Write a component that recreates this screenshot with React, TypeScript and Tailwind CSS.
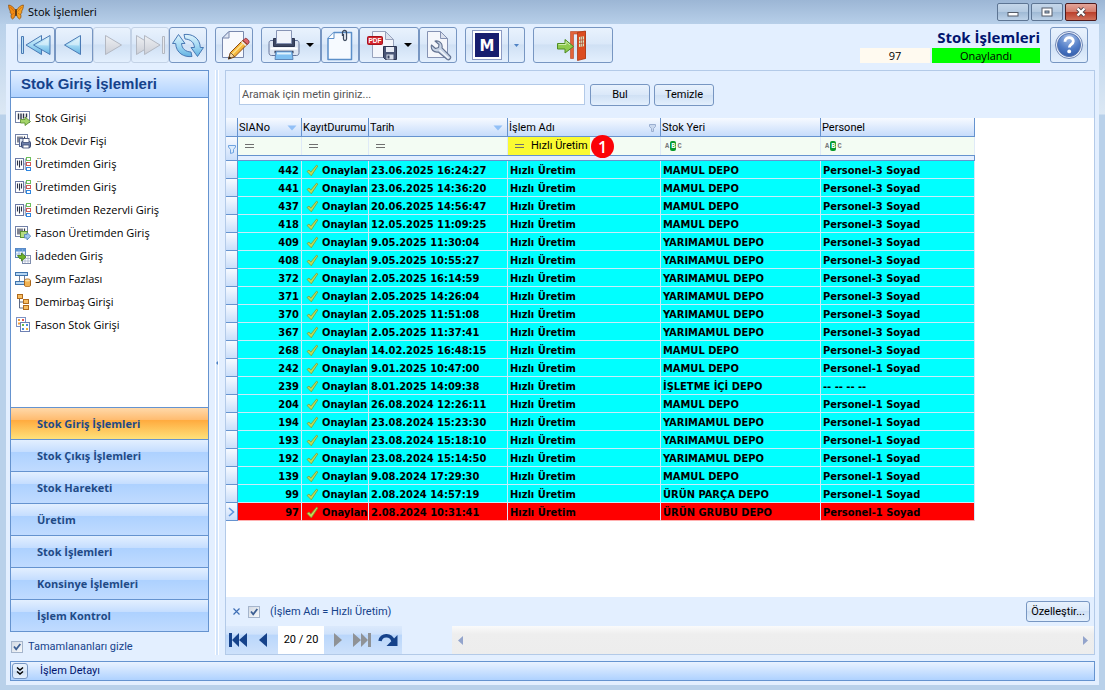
import type { ReactNode } from "react";
import clsx from "clsx";

type IconKind = "in" | "save" | "tree" | "outsource" | "grid" | "count" | "asset" | "squares";

const menuItems: { label: string; icon: IconKind }[] = [
  { label: "Stok Girişi", icon: "in" },
  { label: "Stok Devir Fişi", icon: "save" },
  { label: "Üretimden Giriş", icon: "tree" },
  { label: "Üretimden Giriş", icon: "tree" },
  { label: "Üretimden Rezervli Giriş", icon: "tree" },
  { label: "Fason Üretimden Giriş", icon: "outsource" },
  { label: "İadeden Giriş", icon: "grid" },
  { label: "Sayım Fazlası", icon: "count" },
  { label: "Demirbaş Girişi", icon: "asset" },
  { label: "Fason Stok Girişi", icon: "squares" },
];

const groups = [
  "Stok Giriş İşlemleri",
  "Stok Çıkış İşlemleri",
  "Stok Hareketi",
  "Üretim",
  "Stok İşlemleri",
  "Konsinye İşlemleri",
  "İşlem Kontrol",
];

const rows: [number, string, string, string][] = [
  [442, "23.06.2025 16:24:27", "MAMUL DEPO", "Personel-3 Soyad"],
  [441, "23.06.2025 14:36:20", "MAMUL DEPO", "Personel-3 Soyad"],
  [437, "20.06.2025 14:56:47", "MAMUL DEPO", "Personel-3 Soyad"],
  [418, "12.05.2025 11:09:25", "MAMUL DEPO", "Personel-3 Soyad"],
  [409, "9.05.2025 11:30:04", "YARIMAMUL DEPO", "Personel-3 Soyad"],
  [408, "9.05.2025 10:55:27", "YARIMAMUL DEPO", "Personel-3 Soyad"],
  [372, "2.05.2025 16:14:59", "YARIMAMUL DEPO", "Personel-3 Soyad"],
  [371, "2.05.2025 14:26:04", "YARIMAMUL DEPO", "Personel-3 Soyad"],
  [370, "2.05.2025 11:51:08", "YARIMAMUL DEPO", "Personel-3 Soyad"],
  [367, "2.05.2025 11:37:41", "YARIMAMUL DEPO", "Personel-3 Soyad"],
  [268, "14.02.2025 16:48:15", "MAMUL DEPO", "Personel-3 Soyad"],
  [242, "9.01.2025 10:47:00", "MAMUL DEPO", "Personel-1 Soyad"],
  [239, "8.01.2025 14:09:38", "İŞLETME İÇİ DEPO", "-- -- -- --"],
  [204, "26.08.2024 12:26:11", "MAMUL DEPO", "Personel-1 Soyad"],
  [194, "23.08.2024 15:23:30", "YARIMAMUL DEPO", "Personel-1 Soyad"],
  [193, "23.08.2024 15:18:10", "YARIMAMUL DEPO", "Personel-1 Soyad"],
  [192, "23.08.2024 15:14:50", "YARIMAMUL DEPO", "Personel-1 Soyad"],
  [139, "9.08.2024 17:29:30", "MAMUL DEPO", "Personel-1 Soyad"],
  [99, "2.08.2024 14:57:19", "ÜRÜN PARÇA DEPO", "Personel-1 Soyad"],
  [97, "2.08.2024 10:31:41", "ÜRÜN GRUBU DEPO", "Personel-1 Soyad"],
];

/* ---------- icons ---------- */

function Butterfly() {
  return (
    <svg width="16" height="16" viewBox="0 0 16 16">
      <path d="M7.6 6.5C6 3.5 3 1 .6 1c0 2.500.6 4.600 1.700 6-.5 1.500.2 2.700 1.200 3C2.500 12 3 14.500 4.500 15c1.700-.6 3-3.500 3.200-6z" fill="#f08c14" stroke="#8a4a0c" strokeWidth=".7" />
      <path d="M8.400 6.500C10 3.500 13 1 15.400 1c0 2.500-.6 4.600-1.700 6 .5 1.500-.2 2.700-1.200 3 1 2 .5 4.500-1 5-1.700-.6-3-3.500-3.200-6z" fill="#f6a11e" stroke="#8a4a0c" strokeWidth=".7" />
      <path d="M2.300 3l4 4.500M13.700 3l-4 4.500M4.200 10.500l2-1.500M11.800 10.500l-2-1.500" stroke="#c9600a" strokeWidth=".7" />
      <path d="M8 5v7" stroke="#3a1d05" strokeWidth="1.200" />
    </svg>
  );
}

function BlueDefs() {
  return (
    <defs>
      <linearGradient id="nb" x1="0" y1="0" x2="0" y2="1">
        <stop offset="0" stopColor="#dff3fc" />
        <stop offset=".5" stopColor="#a5daf4" />
        <stop offset="1" stopColor="#62b2e2" />
      </linearGradient>
      <linearGradient id="ng" x1="0" y1="0" x2="0" y2="1">
        <stop offset="0" stopColor="#eef0f3" />
        <stop offset="1" stopColor="#cbced6" />
      </linearGradient>
    </defs>
  );
}

function FirstIcon() {
  return (
    <svg width="32" height="32" viewBox="0 0 32 32" strokeLinejoin="round">
      <BlueDefs />
      <rect x="1.500" y="7.500" width="2" height="17" fill="#b8e0f5" stroke="#4a7ab5" />
      <path d="M21.500 6.500v19L6 16z" fill="url(#nb)" stroke="#4a7ab5" />
      <path d="M30 6.500v19L13.500 16z" fill="url(#nb)" stroke="#4a7ab5" />
      <path d="M28.500 9.500v7l-12-.5z" fill="#fff" opacity=".4" />
    </svg>
  );
}

function PrevIcon() {
  return (
    <svg width="32" height="32" viewBox="0 0 32 32" strokeLinejoin="round">
      <path d="M22.500 6.500v19L6.500 16z" fill="url(#nb)" stroke="#4a7ab5" />
      <path d="M21 9.500v7L9 16z" fill="#fff" opacity=".4" />
    </svg>
  );
}

function NextIcon() {
  return (
    <svg width="32" height="32" viewBox="0 0 32 32" strokeLinejoin="round">
      <path d="M9.500 6.500v19L25.500 16z" fill="url(#ng)" stroke="#b3b8c2" />
    </svg>
  );
}

function LastIcon() {
  return (
    <svg width="32" height="32" viewBox="0 0 32 32" strokeLinejoin="round">
      <path d="M2.500 6.500v19L18 16z" fill="url(#ng)" stroke="#b3b8c2" />
      <path d="M10.500 6.500v19L26 16z" fill="url(#ng)" stroke="#b3b8c2" />
      <rect x="28.500" y="7.500" width="2" height="17" fill="#e8eaee" stroke="#b3b8c2" />
    </svg>
  );
}

function RefreshIcon() {
  return (
    <svg width="32" height="32" viewBox="0 0 32 32" strokeLinejoin="round">
      <path d="M6.500 5.500l6.500 9H9.500c.3 5 4 8.300 9.500 8.500l1 4.500C12 28.500 4 24 3.700 14.500H.5z" fill="url(#nb)" stroke="#4a7ab5" />
      <path d="M25.500 27.500l-6.500-9h3.500c-.3-5-4-8.300-9.500-8.500l-1-4.500C20 4.500 28 9 28.300 18.500h3.200z" fill="url(#nb)" stroke="#4a7ab5" />
    </svg>
  );
}

function EditIcon() {
  return (
    <svg width="32" height="32" viewBox="0 0 32 32">
      <path d="M11 2.500H25.500V28.500H4.500V9z" fill="#f7f9fd" stroke="#7888ad" strokeLinejoin="round" />
      <path d="M11 2.500V9H4.500z" fill="#dfe6f3" stroke="#7888ad" strokeLinejoin="round" />
      <path d="M10.500 30l2-6.500L24.500 11.500l4.500 4L16.500 28z" fill="#f6b73c" stroke="#8a4b12" strokeLinejoin="round" />
      <path d="M14.500 25L26 13.500" stroke="#fbe08d" strokeWidth="1.600" />
      <path d="M25 11.500l2-2c1.500-.7 4.500 2 4 4l-1.500 2z" fill="#e06668" stroke="#8c2f38" />
      <path d="M23.500 12.500l4.500 4" stroke="#e8e8f0" strokeWidth="1.500" />
      <path d="M10.500 30l2-6.500 4 4z" fill="#f5d9a8" stroke="#5b3210" strokeWidth=".7" />
      <path d="M10.500 30.200l.9-3 2 1.900z" fill="#222" />
    </svg>
  );
}

function PrinterIcon() {
  return (
    <svg width="32" height="32" viewBox="0 0 32 32" strokeLinejoin="round">
      <path d="M3 11.500h26c1.500 0 2 1.500 2 3v9c0 2-1 3-2.500 3h-25c-1.500 0-2.500-1-2.500-3v-9c0-1.500.5-3 2-3z" fill="#dde5f2" stroke="#64749a" />
      <path d="M5.500 9.500h21v8h-21z" fill="#3d4763" stroke="#2c3550" />
      <path d="M8.500 1.500h15v13h-15z" fill="#f0f4fb" stroke="#8794b5" />
      <path d="M2.500 19.500h27" stroke="#fff" strokeWidth="2" />
      <path d="M6.500 23h19" stroke="#2e3852" strokeWidth="2.500" />
      <path d="M8 22.500h16l1 8h-18z" fill="#7fc0f2" stroke="#5d86b8" />
      <path d="M9 24.500h14" stroke="#dff1fd" strokeWidth="2" />
    </svg>
  );
}

function PaperClipIcon() {
  return (
    <svg width="32" height="32" viewBox="0 0 32 32">
      <path d="M10 3.500H27.500V30.500H4V9.500z" fill="#f6faff" stroke="#5b8fc9" strokeWidth="1.500" strokeLinejoin="round" />
      <path d="M10 3.500V9.500H4" fill="#fff" stroke="#5b8fc9" strokeLinejoin="round" />
      <path d="M18.500 7V3.500a2 2 0 0 1 4 0V10a1.500 1.500 0 0 1-3 0V5" fill="none" stroke="#3d4a5e" strokeWidth="1.300" />
    </svg>
  );
}

function PdfIcon() {
  return (
    <svg width="32" height="32" viewBox="0 0 32 32">
      <path d="M6.500 2.500H19.500L27.500 10.500V28.500H6.500z" fill="#f4f6fb" stroke="#98a3bd" />
      <path d="M19.500 2.500V10.500H27.500z" fill="#dce2ee" stroke="#98a3bd" />
      <rect x="1.500" y="7.500" width="15" height="8" rx="1" fill="#d3232b" stroke="#a5141c" />
      <text x="2.500" y="14" fontFamily="Liberation Sans, sans-serif" fontWeight="700" fontSize="6.500" fill="#fff">PDF</text>
      <path d="M17.500 17.500h13v13h-11l-2-2z" fill="#4a5676" stroke="#2c3550" />
      <rect x="20" y="18" width="8" height="5" fill="#e8ecf5" />
      <rect x="20.500" y="25.500" width="7" height="5" fill="#d9dfeb" />
      <rect x="21.500" y="26.500" width="2" height="3" fill="#36415f" />
    </svg>
  );
}

function WrenchIcon() {
  return (
    <svg width="32" height="32" viewBox="0 0 32 32" strokeLinejoin="round">
      <path d="M5.500 2.500H18.500L25.500 9.500V28.500H5.500z" fill="#f4f6fb" stroke="#8592b3" />
      <path d="M18.500 2.500V9.500H25.500z" fill="#dce2ee" stroke="#8592b3" />
      <path d="M9.500 16l4 3.500 3-1 .5-3-4-3.500c4-.8 8 2 7 6.800l8.500 8.700c1 1.500-1.500 4.200-3.200 3l-9-7.500c-4.500.8-8-2.500-6.800-7z" fill="#c8d4e6" stroke="#62718f" strokeWidth="1.100" />
      <path d="M17.500 21l9 8.300" stroke="#f5f8fc" strokeWidth="1.200" />
    </svg>
  );
}

function LogoM() {
  return (
    <svg width="30" height="32" viewBox="0 0 30 32">
      <rect x=".5" y="1.500" width="29" height="29" fill="#fff" stroke="#8c9bc4" />
      <rect x="3" y="4" width="24" height="24" fill="#171d6e" />
      <text x="15" y="21.500" textAnchor="middle" fontFamily="DejaVu Sans, sans-serif" fontWeight="700" fontSize="15" fill="#fff">M</text>
    </svg>
  );
}

function DoorIcon() {
  return (
    <svg width="32" height="32" viewBox="0 0 32 32" strokeLinejoin="round">
      <path d="M13.500 2.500h15v27h-2.500V5h-9.500v24.500h-3z" fill="#e2643b" stroke="#b8431f" strokeWidth=".6" />
      <path d="M20.500 3.500l8-1.500v27.500l-8 2z" fill="#dc4c20" stroke="#a83a17" strokeWidth=".8" />
      <path d="M22 8l5-.7v10l-5 .7z" fill="#d8e6c0" />
      <path d="M23.700 7.700v10M25.500 7.500v10M22 11.300l5-.5M22 14.600l5-.5" stroke="#b3452a" strokeWidth=".7" />
      <path d="M.5 14.500h7.500V10.500l8.500 7-8.500 6.500v-4H.5z" fill="#8fcb4f" stroke="#4e8c22" />
      <path d="M1.500 15.500h7.500v-3l4 3.500" fill="none" stroke="#cdebab" />
    </svg>
  );
}

function HelpIcon() {
  return (
    <svg width="32" height="32" viewBox="0 0 32 32">
      <defs>
        <radialGradient id="hp" cx=".5" cy=".15" r=".9">
          <stop offset="0" stopColor="#a9c2ea" />
          <stop offset=".6" stopColor="#4f7bc6" />
          <stop offset="1" stopColor="#2f59a8" />
        </radialGradient>
      </defs>
      <circle cx="16" cy="16" r="13.500" fill="#e8eef8" stroke="#6e86b5" />
      <circle cx="16" cy="16" r="11.500" fill="url(#hp)" stroke="#5574b0" />
      <path d="M12 12.800c0-5.600 8.600-5.300 8.300-.4-.2 3-4 3-4 6" fill="none" stroke="#fff" strokeWidth="2.800" />
      <circle cx="16.200" cy="22.400" r="1.900" fill="#fff" />
    </svg>
  );
}

function Barcode() {
  return (
    <>
      <rect x=".5" y="1.500" width="12" height="10" fill="#fff" stroke="#7382a8" />
      <path d="M3 3.500v6M5 3.500v6M7 3.500v6M9.500 3.500v6" stroke="#2c3348" strokeWidth="1.200" />
    </>
  );
}

function MenuIcon({ kind }: { kind: IconKind }) {
  let body: ReactNode = null;
  if (kind === "in")
    body = (
      <>
        <rect x=".5" y="1.500" width="14" height="11" fill="#fff" stroke="#7382a8" />
        <path d="M3.500 3.500v6M6 3.500v6M8.500 3.500v5M11.500 3.500v4" stroke="#2c3348" strokeWidth="1.400" />
        <path d="M5.500 9.500H10V7l5.500 4.500L10 15.500V13H5.500z" fill="#a4d46a" stroke="#558a2a" strokeWidth=".8" />
      </>
    );
  if (kind === "save")
    body = (
      <>
        <Barcode />
        <rect x="4.500" y="5.500" width="9" height="8" fill="#e3e9f4" stroke="#5b6b96" />
        <rect x="6.500" y="8.500" width="9" height="6" rx="1" fill="#6f80ab" stroke="#3c4a73" />
        <rect x="8" y="5.500" width="6" height="4" fill="#fff" stroke="#3c4a73" strokeWidth=".8" />
        <rect x="8" y="12" width="6" height="3" fill="#fff" stroke="#3c4a73" strokeWidth=".8" />
      </>
    );
  if (kind === "tree")
    body = (
      <>
        <rect x=".5" y="2.500" width="8" height="11" fill="#fff" stroke="#6d7ba6" />
        <path d="M2.500 4.500v5M4.500 4.500v7M6.500 4.500v5" stroke="#2c3348" strokeWidth="1.100" />
        <path d="M9 8h2.500M10.300 3v10.500M10.300 3h1M10.300 13.500h1" fill="none" stroke="#8a94ad" />
        <rect x="11.500" y="1.500" width="4" height="3" fill="#fff" stroke="#6cbf5b" />
        <rect x="11.500" y="6.500" width="4" height="3" fill="#fff" stroke="#cf5b57" />
        <rect x="11.500" y="11.500" width="4" height="3" fill="#fff" stroke="#2f86e0" />
      </>
    );
  if (kind === "outsource")
    body = (
      <>
        <Barcode />
        <rect x="5.500" y="6.500" width="7" height="6" fill="#b7dc83" stroke="#5d9534" />
        <path d="M9.500 9.500H12V7.500l3.700 3.700L12 15V13H9.500z" fill="#9dc4ef" stroke="#4c7db8" strokeWidth=".8" />
      </>
    );
  if (kind === "grid")
    body = (
      <>
        <rect x=".5" y=".5" width="10" height="9" fill="#eef5fd" stroke="#5b84b8" />
        <path d="M.5 2h10" stroke="#5a93d6" strokeWidth="3" />
        <path d="M4 1v8M7.500 1v8M.5 6h10" stroke="#8fb0d8" strokeWidth=".8" />
        <rect x="7.500" y="7.500" width="8" height="8" fill="#fff" stroke="#7d8bab" />
        <path d="M10 8v7M13 8v7M8 10.500h7M8 13h7" stroke="#a9b4cb" strokeWidth=".8" />
        <path d="M2.500 7.500h4V5l4.500 4-4.500 4v-2.500h-2z" fill="#6fb32c" stroke="#3c7a14" strokeWidth=".8" />
      </>
    );
  if (kind === "count")
    body = (
      <>
        <path d="M4.500 4v7M9.500 4v7" stroke="#6f7c95" fill="none" />
        <rect x=".5" y="1.500" width="12" height="3" fill="#b6d6f2" stroke="#3f74ad" />
        <rect x=".5" y="10.500" width="10" height="3" fill="#b6d6f2" stroke="#3f74ad" />
        <path d="M9.500 9.500c0-2 6-2 6 0v5c0 1.500-6 1.500-6 0z" fill="#f0b354" stroke="#a9651a" />
        <ellipse cx="12.500" cy="9.500" rx="2.500" ry="1" fill="#fbdfa4" />
      </>
    );
  if (kind === "asset")
    body = (
      <>
        <path d="M4.500 5v9h4M4.500 8h4" stroke="#5e6a84" fill="none" />
        <rect x="2.500" y=".5" width="5" height="4" fill="#f6bd62" stroke="#b06a1c" />
        <rect x="8.500" y="5.500" width="5" height="4" fill="#f6bd62" stroke="#b06a1c" />
        <rect x="8.500" y="11.500" width="5" height="4" fill="#f6bd62" stroke="#b06a1c" />
      </>
    );
  if (kind === "squares")
    body = (
      <>
        <rect x="1.500" y=".5" width="9" height="9" fill="#fff" stroke="#7d92c4" />
        <path d="M3 2h2v2H3zM3 5.500h2v2H3z" fill="#f09a3a" />
        <path d="M7 2h2v2H7z" fill="#e3574d" />
        <rect x="5.500" y="5.500" width="9" height="9" fill="#fff" stroke="#6d80b3" />
        <path d="M7 7h2v2H7z" fill="#66b84a" />
        <path d="M11 7h2v2h-2zM7 11h2v2H7z" fill="#4a8de0" />
        <path d="M11 11h2v2h-2z" fill="#f0b43a" />
      </>
    );
  return (
    <svg width="16" height="16" viewBox="0 0 16 16" className="shrink-0">
      {body}
    </svg>
  );
}

function CheckMark() {
  return (
    <svg width="13" height="13" viewBox="0 0 13 13" className="shrink-0">
      <path d="M1 7.500l2-1.500 1.800 2.200L10.500 1.200l1.300.8L5.300 11.800z" fill="#c3dd55" stroke="#7a9a3c" strokeWidth=".8" strokeLinejoin="round" />
    </svg>
  );
}

function Funnel() {
  return (
    <svg width="8" height="10" viewBox="0 0 8 10" className="shrink-0">
      <path d="M.5 1.500h7v1.500L5.500 5.500v3l-3 1v-4L.5 3z" fill="#dcebfc" stroke="#6ea3e0" />
    </svg>
  );
}

function SmallFunnel() {
  return (
    <svg width="7" height="8" viewBox="0 0 7 8" className="shrink-0">
      <path d="M.5.500h6v2L4.500 4.500v3h-2v-3L.5 2.500z" fill="#c9d8ee" stroke="#9aaed0" />
    </svg>
  );
}

function SortArrow() {
  return (
    <svg width="10" height="6" viewBox="0 0 10 6" className="shrink-0">
      <path d="M.5.500h9L5 5.500z" fill="#92c0f7" />
    </svg>
  );
}

function Equals() {
  return (
    <svg width="10" height="5" viewBox="0 0 10 5" className="shrink-0" shapeRendering="crispEdges">
      <path d="M0 .5h9M0 3.500h9" stroke="#6f6f6f" />
    </svg>
  );
}

function Abc() {
  return (
    <span className="flex items-center gap-px font-[Liberation_Mono,monospace] text-[7px] leading-[10px] font-bold text-[#777]">
      <span>A</span>
      <span className="rounded-xs bg-[#0a9a2c] px-px text-white">B</span>
      <span>C</span>
    </span>
  );
}

function DropArrow({ className }: { className: string }) {
  return (
    <svg width="8" height="4" viewBox="0 0 8 4" className={className}>
      <path d="M0 0h8L4 4z" fill="currentColor" />
    </svg>
  );
}

/* ---------- parts ---------- */

const face =
  "bg-[linear-gradient(#e9f2fd_0%,#dae8f9_48%,#cfe0f4_49%,#e3effd_100%)] border rounded-[3px]";

function ToolButton({
  label,
  children,
  disabled,
  className = "w-[38px]",
}: {
  label: string;
  children: ReactNode;
  disabled?: boolean;
  className?: string;
}) {
  return (
    <button
      aria-label={label}
      disabled={disabled}
      className={clsx(
        "flex h-9 items-center justify-center",
        face,
        disabled ? "border-[#c3d2e6]" : "border-[#7796c2]",
        className,
      )}
    >
      {children}
    </button>
  );
}

function TextButton({ children, className }: { children: ReactNode; className: string }) {
  return (
    <button className={clsx("flex items-center justify-center border-[#7796c2] text-black", face, className)}>
      {children}
    </button>
  );
}

function Tick({ id, label, className }: { id: string; label: string; className: string }) {
  return (
    <div className={clsx("flex items-center", className)}>
      <span className="relative size-3">
        <input
          id={id}
          type="checkbox"
          defaultChecked
          className="peer block size-3 appearance-none border border-[#a5b5cc] bg-[linear-gradient(135deg,#d3dae4,#f7f9fb)]"
        />
        <svg viewBox="0 0 12 12" className="pointer-events-none invisible absolute inset-0 size-3 peer-checked:visible">
          <path d="M3 5.500l2.200 2.800L9.300 3" fill="none" stroke="#3d5f93" strokeWidth="1.800" />
        </svg>
      </span>
      <label htmlFor={id}>{label}</label>
    </div>
  );
}

function TitleBar() {
  const btn = "flex h-[18px] w-8 items-center justify-center rounded-xs border";
  const blue = "border-[#5d7593] bg-[linear-gradient(#c5d7ea_0%,#b4cae1_48%,#9db8d4_49%,#bdd2e8_100%)]";
  return (
    <header className="flex h-6 items-center gap-1 bg-[linear-gradient(#9cb6d5,#b7cfe9)] px-2">
      <Butterfly />
      <h1 className="flex-1 font-[Open_Sans,sans-serif] text-[11px] text-black">Stok İşlemleri</h1>
      <div className="flex gap-0.5">
        <button aria-label="Simge durumuna küçült" className={clsx(btn, blue)}>
          <svg width="12" height="10" viewBox="0 0 12 10">
            <rect x="1" y="5.500" width="10" height="3.500" fill="#fff" stroke="#535b68" />
          </svg>
        </button>
        <button aria-label="Ekranı kapla" className={clsx(btn, blue)}>
          <svg width="12" height="10" viewBox="0 0 12 10">
            <rect x="1" y="1" width="10" height="8" fill="#fff" stroke="#535b68" />
            <rect x="4" y="4" width="4" height="2" fill="#9db8d4" stroke="#535b68" />
          </svg>
        </button>
        <button aria-label="Kapat" className={clsx(btn, "border-[#4f1a1c] bg-[linear-gradient(#e3a59a_0%,#d57c6c_48%,#b93c28_49%,#d0705a_100%)]")}>
          <svg width="12" height="10" viewBox="0 0 12 10">
            <path d="M2.500 1.500l7 7M9.500 1.500l-7 7" stroke="#53454a" strokeWidth="4" />
            <path d="M2.500 1.500l7 7M9.500 1.500l-7 7" stroke="#fff" strokeWidth="2.300" />
          </svg>
        </button>
      </div>
    </header>
  );
}

function Toolbar() {
  return (
    <div className="flex h-[46px] items-start pt-[3px] pr-[11px] pl-[11px]">
      <div className="flex">
        <ToolButton label="İlk kayıt"><FirstIcon /></ToolButton>
        <ToolButton label="Önceki kayıt"><PrevIcon /></ToolButton>
        <ToolButton label="Sonraki kayıt" disabled><NextIcon /></ToolButton>
        <ToolButton label="Son kayıt" disabled><LastIcon /></ToolButton>
        <ToolButton label="Yenile"><RefreshIcon /></ToolButton>
      </div>
      <ToolButton label="Düzenle" className="ml-2 w-[38px]"><EditIcon /></ToolButton>
      <div className="ml-2 flex">
        <ToolButton label="Yazdır" className="w-[60px] gap-1.5">
          <PrinterIcon />
          <DropArrow className="text-black" />
        </ToolButton>
        <ToolButton label="Dosya ekle"><PaperClipIcon /></ToolButton>
        <ToolButton label="PDF kaydet" className="w-[60px] gap-1.5">
          <PdfIcon />
          <DropArrow className="text-black" />
        </ToolButton>
        <ToolButton label="Ayarlar"><WrenchIcon /></ToolButton>
      </div>
      <div className="ml-2 flex">
        <ToolButton label="M" className="w-11 rounded-r-none"><LogoM /></ToolButton>
        <ToolButton label="M seçenekleri" className="w-4 rounded-l-none border-l-0">
          <svg width="5" height="3" viewBox="0 0 5 3"><path d="M0 0h5L2.500 3z" fill="#4f82c4" /></svg>
        </ToolButton>
      </div>
      <ToolButton label="Çıkış" className="ml-2 w-20"><DoorIcon /></ToolButton>
      <div className="ml-auto flex flex-col items-end">
        <h2 className="font-[Open_Sans,sans-serif] text-[15px] leading-[21px] font-bold text-[#00146e]">Stok İşlemleri</h2>
        <div className="flex gap-0.5 text-center font-[Open_Sans,sans-serif] leading-[15px] text-black">
          <output aria-label="Kayıt no" className="w-[70px] bg-[#fffaf0]">97</output>
          <output aria-label="Durum" className="w-[108px] bg-[#00ff00]">Onaylandı</output>
        </div>
      </div>
      <ToolButton label="Yardım" className="ml-2.5 w-[38px]"><HelpIcon /></ToolButton>
    </div>
  );
}

function Sidebar() {
  return (
    <aside className="flex w-[199px] flex-col">
      <div className="flex flex-1 flex-col border border-[#6593cf] bg-white">
        <h2 className="flex h-[27px] items-center border-b border-[#6593cf] bg-[linear-gradient(#e3efff,#afd2ff)] pl-2.5 font-[Liberation_Sans,Arial,sans-serif] text-[15px] font-bold text-[#15428b]">
          Stok Giriş İşlemleri
        </h2>
        <ul className="flex-1 pt-2 pl-1 font-[Open_Sans,sans-serif] text-[11px] text-black">
          {menuItems.map((m, i) => (
            <li key={i}>
              <a href="#" className="flex h-[23px] items-center gap-1">
                <MenuIcon kind={m.icon} />
                {m.label}
              </a>
            </li>
          ))}
        </ul>
        <nav className="font-[Open_Sans,sans-serif] text-[11px] font-bold text-[#1f4a86]">
          {groups.map((g, i) => (
            <button
              key={g}
              className={clsx(
                "flex h-8 w-full items-center border-t border-[#6593cf] pl-[26px]",
                i === 0
                  ? "bg-[linear-gradient(#ffd9aa_0%,#ffbb6e_39%,#ffab3f_40%,#fee17a_100%)]"
                  : "bg-[linear-gradient(#e3efff_0%,#c4ddff_39%,#add1ff_40%,#c0dbff_100%)]",
              )}
            >
              {g}
            </button>
          ))}
        </nav>
      </div>
      <Tick id="hide-done" label="Tamamlananları gizle" className="h-[23px] gap-[5px] pt-1.5 pl-px text-[#15428b]" />
    </aside>
  );
}

const head =
  "h-[19px] border-r border-b border-[#6593cf] bg-[linear-gradient(#f7faff,#c6dcfb)] pt-px pl-px text-left font-normal";
const filter = "h-[18px] border-r border-[#dfeaf7] bg-[#f3fcf3]";
const indicator = "border-r border-b border-[#6593cf] bg-[linear-gradient(#f7faff,#cadefa)]";

function HeadCell({ label, mark }: { label: string; mark?: ReactNode }) {
  return (
    <th scope="col" className={head}>
      <div className="flex items-center justify-between overflow-hidden">
        <span>{label}</span>
        {mark && <span className="mr-1">{mark}</span>}
      </div>
    </th>
  );
}

function FilterCell({ label, mark, text }: { label: string; mark: ReactNode; text?: boolean }) {
  return (
    <td className={clsx(filter, text ? "px-1" : "px-[7px]")}>
      <div className="flex items-center">
        {mark}
        <input aria-label={label} className="w-0 flex-1 bg-transparent outline-none" />
      </div>
    </td>
  );
}

function StockTable() {
  return (
    <table className="w-[749px] table-fixed border-separate border-spacing-0 whitespace-nowrap text-black">
      <colgroup>
        <col className="w-3" />
        <col className="w-16" />
        <col className="w-[67px]" />
        <col className="w-[139px]" />
        <col className="w-[153px]" />
        <col className="w-40" />
        <col className="w-[154px]" />
      </colgroup>
      <thead>
        <tr>
          <td className={indicator} />
          <HeadCell label="SIANo" mark={<SortArrow />} />
          <HeadCell label="KayıtDurumu" />
          <HeadCell label="Tarih" mark={<SortArrow />} />
          <HeadCell label="İşlem Adı" mark={<SmallFunnel />} />
          <HeadCell label="Stok Yeri" />
          <HeadCell label="Personel" />
        </tr>
        <tr>
          <td rowSpan={2} className={indicator}>
            <div className="flex justify-center">
              <Funnel />
            </div>
          </td>
          <FilterCell label="SIANo filtresi" mark={<Equals />} />
          <FilterCell label="Kayıt durumu filtresi" mark={<Equals />} />
          <FilterCell label="Tarih filtresi" mark={<Equals />} />
          <td className="relative h-[18px] border-r border-[#dfeaf7] bg-[#f3fcf3] p-0">
            <div className="flex h-[18px] w-[82px] items-center gap-1.5 bg-[#fafa32] pl-[7px]">
              <Equals />
              <input aria-label="İşlem adı filtresi" defaultValue="Hızlı Üretim" className="w-0 flex-1 bg-transparent outline-none" />
            </div>
            <span className="absolute -top-0.5 left-[83px] flex size-[23px] items-center justify-center rounded-full bg-[#fb0207] font-[Open_Sans,sans-serif] text-base font-semibold text-white">
              1
            </span>
          </td>
          <FilterCell text label="Stok yeri filtresi" mark={<Abc />} />
          <FilterCell text label="Personel filtresi" mark={<Abc />} />
        </tr>
        <tr>
          <td colSpan={6} className="h-1.5 border-y border-r border-[#6593cf] bg-[#e3efff]" />
        </tr>
      </thead>
      <tbody className="font-[DejaVu_Sans_Condensed,DejaVu_Sans,sans-serif] font-bold">
        {rows.map(([no, date, place, person]) => {
          const active = no === 97;
          const cell = clsx(
            "h-[18px] overflow-hidden border-r border-b px-0.5 pt-0.5 leading-[15px]",
            active
              ? "border-r-[#d5e6fa] border-b-[#ffb0b0] bg-[#ff0000]"
              : "border-[#c9ecfa] bg-[#00ffff]",
          );
          return (
            <tr key={no}>
              <td className={indicator}>
                {active && (
                  <svg width="11" height="12" viewBox="0 0 11 12" className="block">
                    <path d="M3 2l4.500 4L3 10" fill="none" stroke="#5f96de" strokeWidth="1.600" />
                  </svg>
                )}
              </td>
              <td className={clsx(cell, "text-right")}>{no}</td>
              <td className={cell}>
                <div className="flex items-center gap-[3px] pl-0.5">
                  <CheckMark />
                  <span>Onaylan</span>
                </div>
              </td>
              <td className={cell}>{date}</td>
              <td className={cell}>Hızlı Üretim</td>
              <td className={cell}>{place}</td>
              <td className={cell}>{person}</td>
            </tr>
          );
        })}
      </tbody>
    </table>
  );
}

function PagerIcon({ d, off }: { d: string; off?: boolean }) {
  return (
    <svg width="20" height="16" viewBox="0 0 20 16">
      <path d={d} fill={off ? "#8f9296" : "#15428b"} />
    </svg>
  );
}

function Pager() {
  return (
    <div className="flex h-7 items-stretch">
      <div className="flex items-center bg-[linear-gradient(#dbe9fc_0%,#cfe2fb_30%,#b9d6fb_31%,#cde1fb_100%)]">
        <button aria-label="İlk" className="px-0.5"><PagerIcon d="M1 1h3v14H1zM4 8l7-7v14zM11 8l8-7v14z" /></button>
        <button aria-label="Önceki" className="px-1"><PagerIcon d="M5 8l8-7v14z" /></button>
        <span className="flex w-[46px] items-center justify-center self-stretch bg-white text-black">20 / 20</span>
        <button aria-label="Sonraki" className="pl-1"><PagerIcon off d="M6 1l8 7-8 7z" /></button>
        <button aria-label="Son" className="pl-1"><PagerIcon off d="M1 1l8 7-8 7zM9 1l7 7-7 7zM16 1h3v14h-3z" /></button>
        <button aria-label="Sona git" className="pr-0.5 pl-1.5">
          <svg width="22" height="16" viewBox="0 0 22 16">
            <path d="M2 9c1-6.500 11-7.500 13 0" fill="none" stroke="#15428b" strokeWidth="3.500" />
            <path d="M19.500 3v11H8.500z" fill="#15428b" />
          </svg>
        </button>
      </div>
      <div className="ml-[50px] flex flex-1 items-center justify-between bg-[linear-gradient(#fafafa,#eeeeee_30%,#ededed)] px-1.5">
        <button aria-label="Sola kaydır"><svg width="5" height="9" viewBox="0 0 5 9"><path d="M5 0v9L0 4.500z" fill="#93a4cc" /></svg></button>
        <button aria-label="Sağa kaydır"><svg width="5" height="9" viewBox="0 0 5 9"><path d="M0 0v9l5-4.500z" fill="#93a4cc" /></svg></button>
      </div>
    </div>
  );
}

export default function App() {
  return (
    <div className="flex min-h-screen flex-col bg-[linear-gradient(#b9d1ea_24px,#dce8f4_114px,#b9d1ea_115px)] font-[Roboto,sans-serif] text-[11px] leading-4">
      <TitleBar />
      <div className="mx-1.5 mb-[5px] flex flex-1 flex-col bg-[#e3efff]">
        <Toolbar />
        <div className="flex flex-1 pr-1 pl-1">
          <Sidebar />
          <div className="mx-1.5 flex w-1 items-center border-x border-white bg-[#d2e4fb]">
            <svg width="3" height="6" viewBox="0 0 3 6"><path d="M3 0v6L0 3z" fill="#4f82c4" /></svg>
          </div>
          <main className="flex flex-1 flex-col border border-[#b3cae8]">
            <div className="flex h-[47px] gap-[5px] pt-[13px] pl-[13px]">
              <input
                aria-label="Ara"
                placeholder="Aramak için metin giriniz..."
                className="h-[21px] w-[346px] border border-[#b3cae8] bg-white px-0.5 outline-none placeholder:text-[#555]"
              />
              <div className="flex gap-1">
                <TextButton className="h-[22px] w-[60px]">Bul</TextButton>
                <TextButton className="h-[22px] w-[60px]">Temizle</TextButton>
              </div>
            </div>
            <div className="flex-1 bg-white">
              <StockTable />
            </div>
            <div className="flex h-[29px] items-center pr-1 pl-1.5 text-[#15428b]">
              <button aria-label="Filtreyi kaldır">
                <svg width="9" height="9" viewBox="0 0 9 9"><path d="M1.500 1.500l6 6M7.500 1.500l-6 6" stroke="#3f6fb5" strokeWidth="1.200" /></svg>
              </button>
              <Tick id="filter-on" label="(İşlem Adı = Hızlı Üretim)" className="ml-[7px] gap-2.5" />
              <TextButton className="ml-auto h-[21px] w-16">Özelleştir...</TextButton>
            </div>
            <Pager />
          </main>
        </div>
        <div className="mx-1 mt-1.5 mb-1 flex h-5 items-center gap-3 border border-[#6593cf] bg-[linear-gradient(#e9f2ff,#afd2ff)] pl-px">
          <button aria-label="Detayı aç" className={clsx("flex size-4 items-center justify-center border-[#7796c2]", face)}>
            <svg width="8" height="10" viewBox="0 0 8 10"><path d="M1 1.500l3 2.500 3-2.500M1 5.500l3 2.500 3-2.500" fill="none" stroke="#000" strokeWidth="1.500" /></svg>
          </button>
          <span className="text-[#00146e]">İşlem Detayı</span>
        </div>
      </div>
    </div>
  );
}
